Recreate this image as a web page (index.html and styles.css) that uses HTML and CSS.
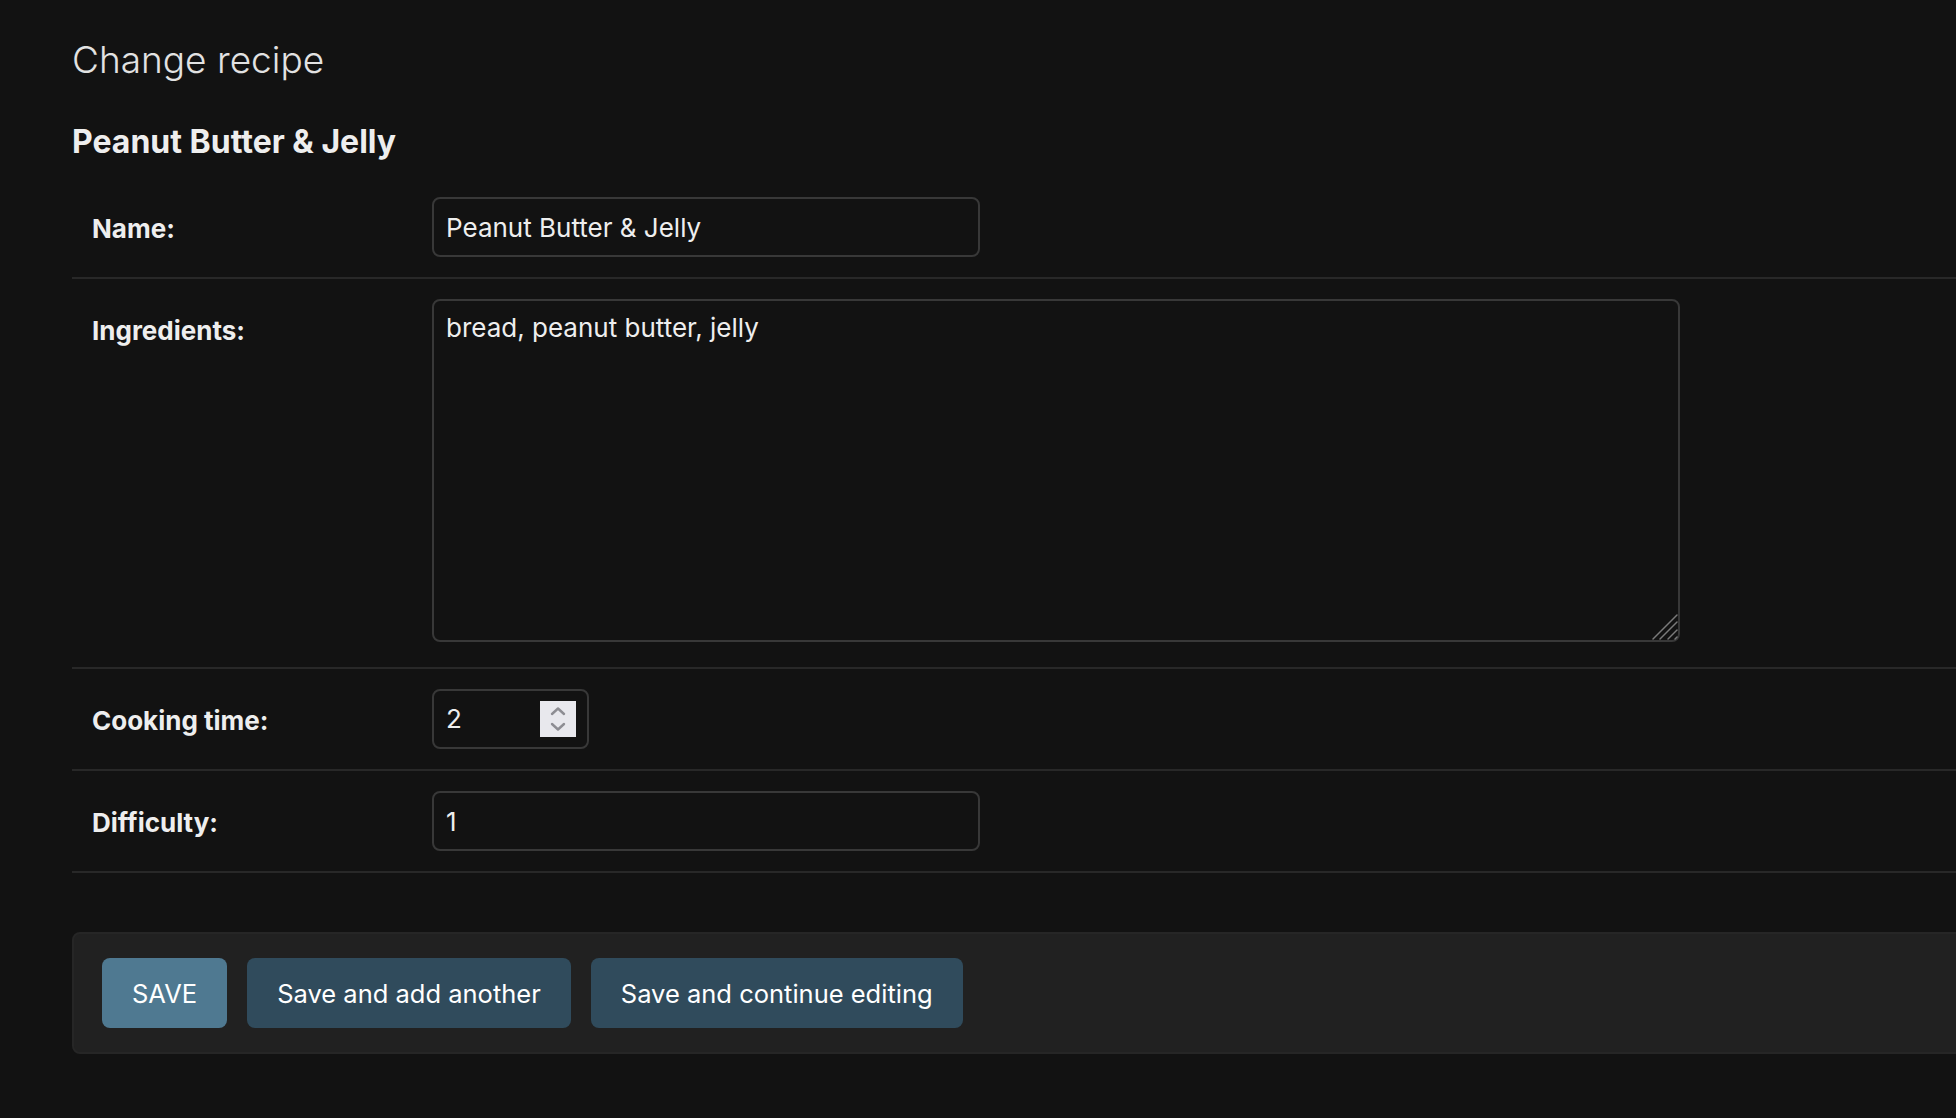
FILE: index.html
```html
<!DOCTYPE html>
<html lang="en">
<head>
<meta charset="utf-8">
<title>Change recipe</title>
<link rel="stylesheet" href="styles.css">
</head>
<body>
<div class="content">
  <h1 class="page-title">Change recipe</h1>
  <h2 class="object-title">Peanut Butter &amp; Jelly</h2>
  <form class="change-form">
    <fieldset class="module">
      <div class="form-row">
        <label class="field-label" for="id_name">Name:</label>
        <input class="text-input text-input-medium" id="id_name" type="text" value="Peanut Butter &amp; Jelly">
      </div>
      <div class="form-row form-row-tall">
        <label class="field-label" for="id_ingredients">Ingredients:</label>
        <div class="textarea-wrap">
          <textarea class="textarea-input" id="id_ingredients">bread, peanut butter, jelly</textarea>
          <svg class="resize-grip" width="28" height="28" viewBox="0 0 28 28" aria-hidden="true">
            <g stroke="#7a7a7a" stroke-width="1.5" stroke-linecap="round">
              <line x1="2" y1="26" x2="26" y2="2"/>
              <line x1="9" y1="26" x2="26" y2="9"/>
              <line x1="17" y1="26" x2="26" y2="17"/>
              <line x1="24" y1="26" x2="26" y2="24"/>
            </g>
          </svg>
        </div>
      </div>
      <div class="form-row">
        <label class="field-label" for="id_cooking_time">Cooking time:</label>
        <div class="number-input">
          <input class="number-field" id="id_cooking_time" type="text" value="2">
          <span class="spinner" aria-hidden="true">
            <svg width="36" height="36" viewBox="0 0 36 36">
              <g fill="none" stroke="#8d8d93" stroke-width="2.4" stroke-linecap="round" stroke-linejoin="round">
                <polyline points="12,13 18,7.5 24,13"/>
                <polyline points="12,23 18,28.5 24,23"/>
              </g>
            </svg>
          </span>
        </div>
      </div>
      <div class="form-row">
        <label class="field-label" for="id_difficulty">Difficulty:</label>
        <input class="text-input text-input-medium" id="id_difficulty" type="text" value="1">
      </div>
    </fieldset>
    <div class="submit-row">
      <button class="btn btn-default" type="button">SAVE</button>
      <button class="btn" type="button">Save and add another</button>
      <button class="btn" type="button">Save and continue editing</button>
    </div>
  </form>
</div>
</body>
</html>
```
FILE: styles.css
```css
html, body {
  margin: 0;
  padding: 0;
  background: #121212;
  overflow: hidden;
}

body {
  font-family: Inter, "Noto Sans", "Liberation Sans", sans-serif;
  color: #eeeeee;
  width: 1956px;
  height: 1118px;
}

.content {
  padding: 0 0 0 72px;
  margin-right: -40px;
}

.page-title {
  margin: 38px 0 0 0;
  font-size: 37px;
  line-height: 44px;
  font-weight: 300;
  color: #e2e2e2;
}

.object-title {
  margin: 43px 0 0 0;
  font-size: 32px;
  line-height: 34px;
  font-weight: 700;
  color: #eeeeee;
}

.change-form {
  margin: 0;
}

.module {
  margin: 18px 0 0 0;
  padding: 0;
  border: none;
}

.form-row {
  display: flex;
  align-items: flex-start;
  padding: 20px;
  border-bottom: 2px solid #282828;
}

.form-row-tall {
  padding-bottom: 25px;
}

.field-label {
  width: 320px;
  padding: 14px 20px 0 0;
  flex-shrink: 0;
  font-size: 26px;
  line-height: 36px;
  font-weight: 700;
  color: #eeeeee;
}

.text-input,
.textarea-input,
.number-input {
  box-sizing: border-box;
  border: 2px solid #383838;
  border-radius: 8px;
  background: #121212;
  color: #eeeeee;
  font-family: Inter, "Noto Sans", "Liberation Sans", sans-serif;
  font-size: 26px;
  line-height: 36px;
  margin: 0;
  outline: none;
}

.text-input {
  height: 60px;
  padding: 10px 12px;
}

.text-input-medium {
  width: 548px;
}

.textarea-wrap {
  position: relative;
  width: 1248px;
  height: 343px;
}

.textarea-input {
  display: block;
  width: 1248px;
  height: 343px;
  padding: 9px 12px 10px;
  resize: none;
}

.resize-grip {
  position: absolute;
  right: 1px;
  bottom: 1px;
}

.number-input {
  width: 157px;
  height: 60px;
  display: flex;
  align-items: center;
  padding: 0 11px 0 12px;
}

.number-field {
  flex: 1;
  min-width: 0;
  border: none;
  background: transparent;
  color: #eeeeee;
  font-family: inherit;
  font-size: 26px;
  line-height: 36px;
  padding: 0;
  margin: 0;
  outline: none;
}

.spinner {
  width: 36px;
  height: 36px;
  background: #e8e8ed;
  display: flex;
}

.submit-row {
  margin-top: 59px;
  display: flex;
  gap: 20px;
  padding: 24px 28px;
  background: #212121;
  border: 2px solid #262626;
  border-radius: 8px;
}

.btn {
  height: 70px;
  padding: 0 30px;
  border: none;
  border-radius: 8px;
  background: #304b5c;
  color: #ffffff;
  font-family: Inter, "Noto Sans", "Liberation Sans", sans-serif;
  font-size: 25.5px;
  font-weight: 400;
  cursor: pointer;
}

.btn-default {
  background: #4f7991;
}
```
